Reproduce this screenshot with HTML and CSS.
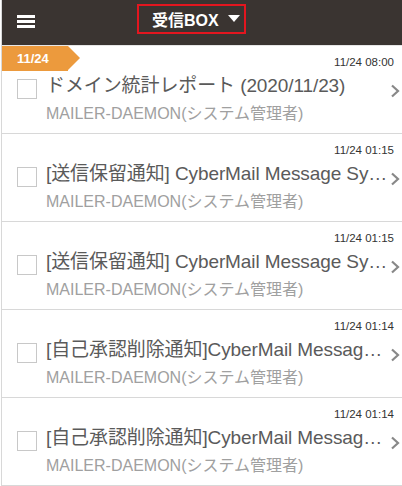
FILE: index.html
```html
<!DOCTYPE html>
<html lang="ja">
<head>
<meta charset="utf-8">
<link rel="stylesheet" href="styles.css">
</head>
<body>
<div class="app">
  <header class="header">
    <div class="menu"><span></span><span></span><span></span></div>
    <div class="title">受信BOX <span class="caret"></span></div>
  </header>
  <ul class="list">
    <li class="row">
      <div class="tag">11/24</div>
      <div class="time">11/24 08:00</div>
      <div class="main">
        <span class="check"></span>
        <div class="text">
          <div class="subject">ドメイン統計レポート (2020/11/23)</div>
          <div class="sender">MAILER-DAEMON(システム管理者)</div>
        </div>
        <svg class="chev" viewBox="0 0 10 14" width="10" height="14"><path d="M2 1.5 L8 7 L2 12.5" fill="none" stroke="#888" stroke-width="2.2"/></svg>
      </div>
    </li>
    <li class="row">
      <div class="time">11/24 01:15</div>
      <div class="main">
        <span class="check"></span>
        <div class="text">
          <div class="subject">[送信保留通知] CyberMail Message System</div>
          <div class="sender">MAILER-DAEMON(システム管理者)</div>
        </div>
        <svg class="chev" viewBox="0 0 10 14" width="10" height="14"><path d="M2 1.5 L8 7 L2 12.5" fill="none" stroke="#888" stroke-width="2.2"/></svg>
      </div>
    </li>
    <li class="row">
      <div class="time">11/24 01:15</div>
      <div class="main">
        <span class="check"></span>
        <div class="text">
          <div class="subject">[送信保留通知] CyberMail Message System</div>
          <div class="sender">MAILER-DAEMON(システム管理者)</div>
        </div>
        <svg class="chev" viewBox="0 0 10 14" width="10" height="14"><path d="M2 1.5 L8 7 L2 12.5" fill="none" stroke="#888" stroke-width="2.2"/></svg>
      </div>
    </li>
    <li class="row">
      <div class="time">11/24 01:14</div>
      <div class="main">
        <span class="check"></span>
        <div class="text">
          <div class="subject">[自己承認削除通知]CyberMail Message System</div>
          <div class="sender">MAILER-DAEMON(システム管理者)</div>
        </div>
        <svg class="chev" viewBox="0 0 10 14" width="10" height="14"><path d="M2 1.5 L8 7 L2 12.5" fill="none" stroke="#888" stroke-width="2.2"/></svg>
      </div>
    </li>
    <li class="row">
      <div class="time">11/24 01:14</div>
      <div class="main">
        <span class="check"></span>
        <div class="text">
          <div class="subject">[自己承認削除通知]CyberMail Message System</div>
          <div class="sender">MAILER-DAEMON(システム管理者)</div>
        </div>
        <svg class="chev" viewBox="0 0 10 14" width="10" height="14"><path d="M2 1.5 L8 7 L2 12.5" fill="none" stroke="#888" stroke-width="2.2"/></svg>
      </div>
    </li>
  </ul>
</div>
</body>
</html>
```

FILE: styles.css
```css
* { box-sizing: border-box; }
html, body { margin: 0; padding: 0; background: #fff; }
body {
  font-family: "Liberation Sans", Arial, "Noto Sans CJK JP", sans-serif;
  overflow: hidden;
  height: 486px;
}
.app {
  margin-left: 1px;
  border-left: 1px solid #d8d8d8;
  min-height: 486px;
}
.header {
  background: #3a3431;
  display: flex;
  align-items: center;
  border-bottom: 1px solid #e6e6e6;
  height: 46px;
}
.menu {
  width: 18px;
  margin-left: 15px;
  display: flex;
  flex-direction: column;
  gap: 2.5px;
  margin-top: -2px;
}
.menu span {
  display: block;
  height: 2.5px;
  background: #fff;
}
.title {
  margin-left: 102px;
  margin-top: -8px;
  width: 109px;
  height: 30px;
  border: 2px solid #e3161f;
  color: #fff;
  font-weight: bold;
  font-size: 16px;
  display: flex;
  align-items: center;
  padding-left: 13px;
  white-space: nowrap;
}
.caret {
  display: inline-block;
  width: 0;
  height: 0;
  margin-left: 9px;
  border-left: 6.5px solid transparent;
  border-right: 6.5px solid transparent;
  border-top: 7px solid #fff;
}
.list {
  list-style: none;
  margin: 0;
  padding: 0;
}
.row {
  position: relative;
  height: 88px;
  border-bottom: 1px solid #d8d8d8;
  padding: 9px 8px 0 0;
}
.tag {
  position: absolute;
  left: 0;
  top: 0;
  height: 25px;
  width: 66px;
  background: #ec9a3d;
  color: #fff;
  font-weight: bold;
  font-size: 13px;
  line-height: 25px;
  padding-left: 15px;
}
.tag::after {
  content: "";
  position: absolute;
  right: -12px;
  top: 0;
  border-top: 12.5px solid transparent;
  border-bottom: 12.5px solid transparent;
  border-left: 12px solid #ec9a3d;
}
.time {
  text-align: right;
  font-size: 11.5px;
  color: #333;
  line-height: 14px;
}
.main {
  display: flex;
  align-items: flex-start;
}
.check {
  flex: none;
  width: 20px;
  height: 20px;
  border: 1px solid #c8c8c8;
  margin: 10px 9px 0 15px;
  background: #fff;
}
.text {
  flex: 1;
  min-width: 0;
}
.subject {
  font-size: 19px;
  letter-spacing: -0.1px;
  color: #5a5a5a;
  line-height: 24px;
  margin-top: 5px;
  white-space: nowrap;
  overflow: hidden;
  text-overflow: ellipsis;
}
.sender {
  font-size: 16px;
  color: #a0a0a0;
  line-height: 20px;
  margin-top: 6px;
  white-space: nowrap;
}
.chev {
  flex: none;
  margin-top: 15px;
  margin-right: -6px;
  margin-left: 1px;
}
```
